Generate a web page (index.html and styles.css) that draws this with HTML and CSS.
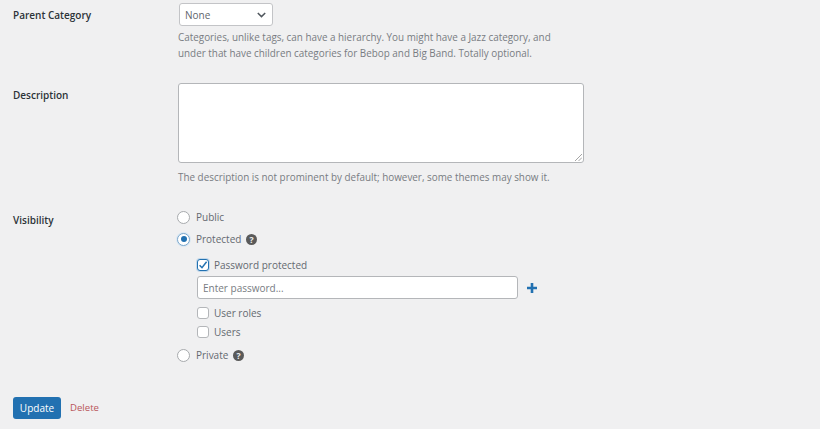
FILE: index.html
```html
<!DOCTYPE html>
<html lang="en">
<head>
<meta charset="utf-8">
<title>Edit Category</title>
<link rel="stylesheet" href="styles.css">
</head>
<body>
<form class="form">
  <div class="row row-parent">
    <div class="label label-parent">Parent Category</div>
    <div class="field">
      <div class="select"><span>None</span>
        <svg class="chev" width="9" height="6" viewBox="0 0 9 6"><path d="M.8 1 4.5 4.6 8.2 1" fill="none" stroke="#50575e" stroke-width="1.5"/></svg>
      </div>
      <p class="help help-parent">Categories, unlike tags, can have a hierarchy. You might have a Jazz category, and<br>under that have children categories for Bebop and Big Band. Totally optional.</p>
    </div>
  </div>
  <div class="row row-desc">
    <div class="label label-desc">Description</div>
    <div class="field">
      <div class="textarea">
        <svg class="grip" width="7" height="7" viewBox="0 0 7 7"><path d="M7 0 0 7M7 3.5 3.5 7" stroke="#a5a5a5" stroke-width="1"/></svg>
      </div>
      <p class="help help-desc">The description is not prominent by default; however, some themes may show it.</p>
    </div>
  </div>
  <div class="row row-vis">
    <div class="label label-vis">Visibility</div>
    <div class="field">
      <div class="opt opt-public"><span class="radio"></span>Public</div>
      <div class="opt opt-protected"><span class="radio on"></span>Protected
        <svg class="q" width="11" height="11" viewBox="0 0 12 12"><circle cx="6" cy="6" r="6" fill="#5a5a5a"/><text x="6" y="9.4" text-anchor="middle" class="q-text">?</text></svg>
      </div>
      <div class="sub">
        <div class="opt check-first"><span class="check on">
          <svg width="10" height="10" viewBox="0 0 10 10"><path d="M1.6 5.2 4 7.7 8.6 1.8" fill="none" stroke="#2271b1" stroke-width="1.5"/></svg>
        </span>Password protected</div>
        <div class="pass-row">
          <div class="input">Enter password...</div>
          <svg class="plus" width="10" height="10" viewBox="0 0 10 10"><path d="M5 0v10M0 5h10" stroke="#2271b1" stroke-width="2.6"/></svg>
        </div>
        <div class="opt check-roles"><span class="check"></span>User roles</div>
        <div class="opt check-users"><span class="check"></span>Users</div>
      </div>
      <div class="opt opt-private"><span class="radio"></span>Private
        <svg class="q" width="11" height="11" viewBox="0 0 12 12"><circle cx="6" cy="6" r="6" fill="#5a5a5a"/><text x="6" y="9.4" text-anchor="middle" class="q-text">?</text></svg>
      </div>
    </div>
  </div>
  <div class="actions">
    <span class="button">Update</span>
    <a class="delete" href="#">Delete</a>
  </div>
</form>
</body>
</html>
```
FILE: styles.css
```css
* { box-sizing: border-box; }
html, body { margin: 0; padding: 0; }
body {
  width: 820px;
  height: 429px;
  overflow: hidden;
  background: #f0f0f1;
  color: #50575e;
  font-family: "Open Sans", sans-serif;
  font-size: 10px;
  line-height: 16px;
}
.form { padding: 3px 0 0 13px; }
.row { display: grid; grid-template-columns: 165px 1fr; }
.label { color: #2c3338; font-weight: 600; }
.label-parent { padding-top: 4px; }
.label-desc { padding-top: 4px; }
.label-vis { padding-top: 3px; }
.row-desc { margin-top: 22px; }
.row-vis { margin-top: 24px; }
.select {
  width: 94px;
  height: 23px;
  margin-left: 1px;
  padding: 0 6px 0 5px;
  display: flex;
  align-items: center;
  justify-content: space-between;
  background: #fff;
  border: 1px solid #c3c4c7;
  border-radius: 3px;
  color: #5f666c;
}
.help { margin: 0; color: #787c82; font-size: 9.9px; }
.help-parent { margin-top: 3px; }
.help-desc { margin-top: 6px; }
.textarea {
  width: 406px;
  height: 80px;
  position: relative;
  background: #fff;
  border: 1px solid #b4b6b9;
  border-radius: 3px;
}
.grip { position: absolute; right: 1px; bottom: 1px; }
.opt { display: flex; align-items: center; height: 16px; color: #646970; }
.opt-protected { margin-top: 6px; }
.radio {
  width: 13px;
  height: 13px;
  margin-right: 6px;
  flex: none;
  border: 1px solid #a7aaad;
  border-radius: 50%;
  background: #fff;
  display: flex;
  align-items: center;
  justify-content: center;
}
.radio.on { border-color: #7aa6cb; box-shadow: 0 0 0 1px #dbe8f3; }
.radio.on::before {
  content: "";
  width: 6px;
  height: 6px;
  border-radius: 50%;
  background: #2271b1;
}
.opt-public, .opt-protected, .opt-private { margin-left: -1px; }
.q { margin-left: 5px; flex: none; }
.q-text { fill: #f0f0f1; font: 700 9.5px "Open Sans", sans-serif; }
.sub { padding-left: 19px; margin-top: 10px; }
.check {
  width: 12px;
  height: 12px;
  margin-right: 5px;
  flex: none;
  border: 1px solid #b4b6b9;
  border-radius: 3px;
  background: #fff;
  display: flex;
  align-items: center;
  justify-content: center;
}
.check.on { border-color: #2271b1; box-shadow: 0 0 0 1px #c5d9ea; }
.pass-row { display: flex; align-items: center; margin-top: 3px; }
.input {
  width: 321px;
  height: 23px;
  padding-left: 5px;
  display: flex;
  align-items: center;
  background: #fff;
  border: 1px solid #b4b6b9;
  border-radius: 3px;
  color: #787c82;
}
.plus { margin-left: 9px; }
.check-roles { margin-top: 6px; }
.check-users { margin-top: 3px; }
.opt-private { margin-top: 7px; }
.actions { display: flex; align-items: center; margin-top: 34px; }
.button {
  width: 48px;
  height: 22px;
  display: flex;
  align-items: center;
  justify-content: center;
  background: #2271b1;
  border-radius: 3px;
  color: #fff;
}
.delete { margin-left: 9px; color: #b9565a; font-size: 9.6px; text-decoration: none; }
```
